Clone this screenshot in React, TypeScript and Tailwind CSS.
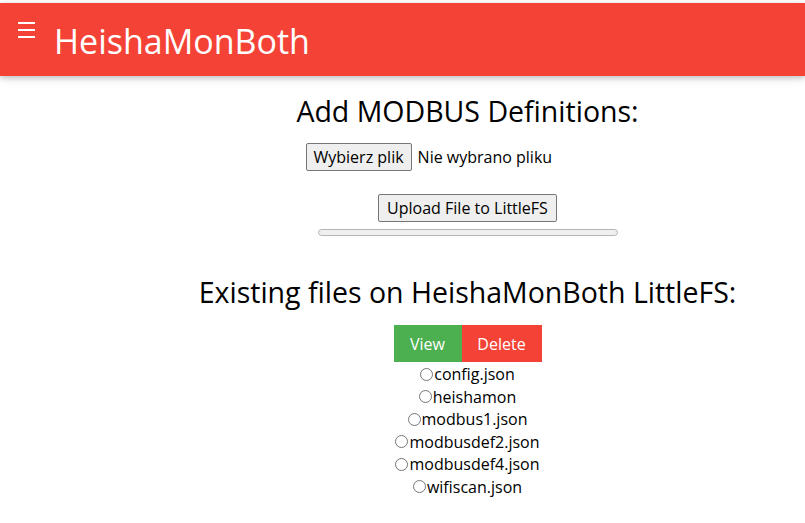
import { useState } from 'react';

const files = [
  'config.json',
  'heishamon',
  'modbus1.json',
  'modbusdef2.json',
  'modbusdef4.json',
  'wifiscan.json',
];

export default function App() {
  const [selected, setSelected] = useState<string | null>(null);

  return (
    <div className="min-h-screen bg-white pt-[3px] font-['Open_Sans',sans-serif] text-black">
      <header className="flex h-[73px] items-start bg-[#f44336] text-white shadow-[0_2px_5px_rgba(0,0,0,0.16),0_2px_10px_rgba(0,0,0,0.12)]">
        <button className="mt-[19px] ml-[18px] flex w-[17px] flex-col gap-[5px]">
          <span className="h-[2px] w-full bg-white" />
          <span className="h-[2px] w-full bg-white" />
          <span className="h-[2px] w-full bg-white" />
        </button>
        <h1 className="ml-[19px] mt-[18px] text-[34px] leading-[40px]">HeishaMonBoth</h1>
      </header>

      <main className="pl-[130px] text-center">
        <h2 className="mt-[17px] text-[28.5px] leading-[36px]">Add MODBUS Definitions:</h2>

        <div className="mx-auto mt-[14px] flex w-[324px] items-center text-[16px]">
          <button className="h-[28px] rounded-[2px] border border-[#767676] bg-[#efefef] px-[7px]">
            Wybierz plik
          </button>
          <span className="ml-[6px]">Nie wybrano pliku</span>
        </div>

        <div className="mt-[23px]">
          <button className="h-[28px] rounded-[2px] border border-[#767676] bg-[#efefef] px-[8px] text-[16px]">
            Upload File to LittleFS
          </button>
        </div>

        <div className="mx-auto mt-[7px] h-[7px] w-[300px] rounded-full border border-[#b5b5b5] bg-[#efefef]" />

        <h2 className="mt-[38px] text-[28.5px] leading-[36px]">Existing files on HeishaMonBoth LittleFS:</h2>

        <div className="mt-[15px] flex justify-center text-[16px] text-white">
          <button className="h-[37px] w-[68px] bg-[#4caf50]">View</button>
          <button className="h-[37px] w-[80px] bg-[#f44336]">Delete</button>
        </div>

        <ul className="mt-[1px] flex flex-col items-center text-[16px]">
          {files.map((f) => (
            <li
              key={f}
              className="flex h-[22.5px] cursor-pointer items-center leading-[22.5px]"
              onClick={() => setSelected(f)}
            >
              <span className="mr-[1px] flex h-[13px] w-[13px] items-center justify-center rounded-full border border-[#767676] bg-white">
                {selected === f && <span className="h-[7px] w-[7px] rounded-full bg-[#0075ff]" />}
              </span>
              {f}
            </li>
          ))}
        </ul>
      </main>
    </div>
  );
}
